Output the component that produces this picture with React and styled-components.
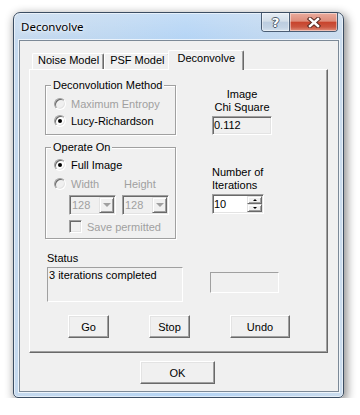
import React from 'react';
import styled, { createGlobalStyle } from 'styled-components';

const GlobalStyle = createGlobalStyle`
  html, body {
    margin: 0;
    padding: 0;
    background: #fff;
  }
  body {
    font-family: 'Liberation Sans', Arial, sans-serif;
    font-size: 11px;
    color: #000;
  }
`;

const GREY_TEXT = '#a0a0a0';

const Page = styled.div`
  padding: 12px 0 0 13px;
`;

const Window = styled.div`
  box-sizing: border-box;
  width: 331px;
  height: 386px;
  display: flex;
  flex-direction: column;
  padding: 0 4px 5px 5px;
  border: 1px solid #3b4d62;
  border-radius: 7px 7px 5px 5px;
  background: linear-gradient(180deg, rgba(255, 255, 255, 0.22) 0, rgba(255, 255, 255, 0) 28px),
    linear-gradient(90deg, #c5d9ee 0%, #bdd7f1 30%, #b4d4f5 52%, #bfd7f0 78%, #cadcee 100%);
  box-shadow: inset 0 0 0 1px rgba(255, 255, 255, 0.55), 2px 3px 10px 1px rgba(0, 0, 0, 0.45);
`;

const TitleBar = styled.div`
  display: flex;
  align-items: flex-start;
  height: 27px;
  flex-shrink: 0;
`;

const Title = styled.div`
  margin: 6px 0 0 2px;
  font-family: 'Noto Sans', 'Open Sans', sans-serif;
  font-size: 11.5px;
  line-height: 15px;
  color: #000;
  text-shadow: 0 0 6px rgba(255, 255, 255, 0.95), 0 0 3px rgba(255, 255, 255, 0.9);
`;

const CaptionButtons = styled.div`
  display: flex;
  margin: 0 1px 0 auto;
  height: 19px;
  box-sizing: border-box;
  border: 1px solid #4a5d74;
  border-top: none;
  border-radius: 0 0 4px 4px;
  overflow: hidden;
`;

const CaptionButton = styled.div`
  display: flex;
  align-items: center;
  justify-content: center;
  width: ${(p) => p.$w}px;
  box-shadow: inset 0 0 0 1px rgba(255, 255, 255, 0.45);
  background: ${(p) =>
    p.$close
      ? 'linear-gradient(180deg, #eaab9d 0%, #de8d7b 45%, #c8442d 52%, #cb5741 78%, #e3927e 100%)'
      : 'linear-gradient(180deg, #e6edf5 0%, #d3dee9 45%, #bccde0 52%, #c3d3e4 80%, #d6e2ee 100%)'};
  & + & {
    border-left: 1px solid #4a5d74;
  }
`;

const HelpGlyph = styled.span`
  font-family: 'DejaVu Sans', sans-serif;
  font-weight: bold;
  font-size: 13px;
  line-height: 13px;
  color: #fff;
  text-shadow: 1px 0 0 #4d5b6c, -1px 0 0 #4d5b6c, 0 1px 0 #4d5b6c, 0 -1px 0 #4d5b6c;
`;

const Client = styled.div`
  flex: 1;
  display: flex;
  flex-direction: column;
  padding: 9px 10px 0 9px;
  border: 1px solid #7c8997;
  background: #f0f0f0;
  box-shadow: 0 0 0 1px rgba(255, 255, 255, 0.7);
`;

const TabStrip = styled.div`
  position: relative;
  z-index: 1;
  display: flex;
  align-items: flex-end;
  height: 19px;
  padding-left: 3px;
`;

const Tab = styled.div`
  position: relative;
  z-index: ${(p) => (p.$active ? 2 : 1)};
  box-sizing: border-box;
  height: ${(p) => (p.$active ? 20 : 16)}px;
  margin: ${(p) => (p.$active ? '0 -2px -1px -2px' : '0')};
  padding: ${(p) => (p.$active ? '1px 8px 0 9px' : '0 4px 0 5px')};
  line-height: 13px;
  background: #f0f0f0;
  border: 1px solid;
  border-bottom: none;
  border-color: #fff #696969 #fff #fff;
  border-radius: 2px 2px 0 0;
  box-shadow: inset -1px 0 0 #a0a0a0;
  white-space: nowrap;
`;

const Panel = styled.div`
  box-sizing: border-box;
  width: 299px;
  height: 284px;
  padding: 9px 0 0 15px;
  border: 1px solid;
  border-color: #fff #696969 #696969 #fff;
  box-shadow: inset -1px -1px 0 #a0a0a0;
`;

const TopGrid = styled.div`
  display: grid;
  grid-template-columns: 131px 60px;
  column-gap: 36px;
  row-gap: 6px;
  align-items: start;
`;

const Group = styled.fieldset`
  box-sizing: border-box;
  width: 131px;
  min-width: 0;
  margin: 0;
  padding: ${(p) => p.$pad};
  border: 1px solid #a0a0a0;
  box-shadow: inset 1px 1px 0 #fff, 1px 1px 0 #fff;
`;

const Legend = styled.legend`
  margin-left: -3px;
  padding: 0 2px;
  line-height: 13px;
  background: #f0f0f0;
`;

const OptionRow = styled.div`
  display: flex;
  align-items: center;
  height: 17px;
  color: ${(p) => (p.$disabled ? GREY_TEXT : '#000')};
  margin-top: ${(p) => p.$mt || 0}px;
`;

const Radio = styled.span`
  position: relative;
  box-sizing: border-box;
  flex-shrink: 0;
  width: 12px;
  height: 12px;
  margin-right: 5px;
  border-radius: 50%;
  border: 1px solid;
  border-color: #a0a0a0 #fff #fff #a0a0a0;
  box-shadow: inset 1px 1px 0 #696969, inset -1px -1px 0 #e3e3e3;
  background: ${(p) => (p.$disabled ? '#f0f0f0' : '#fff')};
  &::after {
    content: '';
    display: ${(p) => (p.$checked ? 'block' : 'none')};
    position: absolute;
    left: 3px;
    top: 3px;
    width: 4px;
    height: 4px;
    border-radius: 50%;
    background: #000;
  }
`;

const SizeLabel = styled.span`
  width: ${(p) => p.$w}px;
`;

const ComboRow = styled.div`
  display: flex;
  gap: 6px;
  margin: 3px 0 0 15px;
`;

const Combo = styled.div`
  box-sizing: border-box;
  display: flex;
  align-items: center;
  width: 47px;
  height: 20px;
  padding: 1px 1px 1px 1px;
  border: 1px solid;
  border-color: #a0a0a0 #fff #fff #a0a0a0;
  box-shadow: inset 1px 1px 0 #696969, inset -1px -1px 0 #e3e3e3;
  color: ${GREY_TEXT};
  line-height: 13px;
`;

const ComboText = styled.span`
  flex: 1;
  padding-left: 1px;
`;

const RaisedButton = styled.span`
  box-sizing: border-box;
  display: flex;
  align-items: center;
  justify-content: center;
  width: ${(p) => p.$w}px;
  height: ${(p) => p.$h}px;
  background: #f0f0f0;
  border: 1px solid;
  border-color: #e3e3e3 #696969 #696969 #e3e3e3;
  box-shadow: inset 1px 1px 0 #fff, inset -1px -1px 0 #a0a0a0;
`;

const Arrow = styled.span`
  width: 0;
  height: 0;
  border-left: ${(p) => p.$size}px solid transparent;
  border-right: ${(p) => p.$size}px solid transparent;
  ${(p) => (p.$up ? 'border-bottom' : 'border-top')}: ${(p) => p.$size}px solid ${(p) => p.$color};
`;

const CheckRow = styled.div`
  display: flex;
  align-items: center;
  height: 13px;
  margin: 5px 0 0 15px;
  color: ${GREY_TEXT};
`;

const CheckBox = styled.span`
  box-sizing: border-box;
  width: 13px;
  height: 13px;
  margin-right: 5px;
  border: 1px solid;
  border-color: #a0a0a0 #fff #fff #a0a0a0;
  box-shadow: inset 1px 1px 0 #696969, inset -1px -1px 0 #e3e3e3;
  background: #f0f0f0;
`;

const SideBlock = styled.div`
  display: flex;
  flex-direction: column;
  align-items: ${(p) => (p.$center ? 'center' : 'flex-start')};
  margin-top: ${(p) => p.$mt}px;
  line-height: 13px;
`;

const FieldBox = styled.div`
  box-sizing: border-box;
  display: flex;
  align-items: center;
  width: ${(p) => p.$w}px;
  height: ${(p) => p.$h}px;
  margin-top: 2px;
  border: 1px solid;
  border-color: #a0a0a0 #fff #fff #a0a0a0;
  box-shadow: inset 1px 1px 0 #696969, inset -1px -1px 0 #e3e3e3;
  background: ${(p) => (p.$white ? '#fff' : '#f0f0f0')};
`;

const FieldText = styled.span`
  flex: 1;
  padding-left: 1px;
`;

const SpinButtons = styled.div`
  display: flex;
  flex-direction: column;
  margin-right: 1px;
`;

const StatusRow = styled.div`
  display: flex;
  align-items: flex-start;
  margin: 13px 0 0 2px;
`;

const StatusBlock = styled.div`
  display: flex;
  flex-direction: column;
  line-height: 13px;
`;

const StaticBox = styled.div`
  box-sizing: border-box;
  width: ${(p) => p.$w}px;
  height: ${(p) => p.$h}px;
  margin-top: ${(p) => p.$mt}px;
  margin-left: ${(p) => p.$ml || 0}px;
  padding: 1px 0 0 1px;
  border: 1px solid;
  border-color: #a0a0a0 #fff #fff #a0a0a0;
  line-height: 13px;
`;

const ButtonRow = styled.div`
  display: flex;
  gap: 40px;
  margin: 13px 0 0 23px;
`;

const Button = styled.button`
  box-sizing: border-box;
  width: ${(p) => p.$w}px;
  height: 23px;
  padding: 0;
  font-family: 'Liberation Sans', Arial, sans-serif;
  font-size: 11px;
  color: #000;
  background: #f0f0f0;
  border: 1px solid;
  border-color: #fff #696969 #696969 #fff;
  box-shadow: inset -1px -1px 0 #a0a0a0, inset 1px 1px 0 #e3e3e3;
`;

const Footer = styled.div`
  display: flex;
  justify-content: center;
  width: 299px;
  padding-right: 2px;
  box-sizing: border-box;
  margin-top: 8px;
`;

const CloseIcon = () => (
  <svg width="14" height="11" viewBox="0 0 14 11">
    <path d="M3 2 L11 9 M11 2 L3 9" stroke="#5a2a22" strokeWidth="4.4" strokeLinecap="square" />
    <path d="M3 2 L11 9 M11 2 L3 9" stroke="#fff" strokeWidth="2.4" strokeLinecap="square" />
  </svg>
);

const Radiobutton = ({ checked, disabled, children }) => (
  <>
    <Radio $checked={checked} $disabled={disabled} />
    {children}
  </>
);

const DropDown = ({ value }) => (
  <Combo>
    <ComboText>{value}</ComboText>
    <RaisedButton $w={15} $h={16}>
      <Arrow $size={4} $color="#a0a0a0" />
    </RaisedButton>
  </Combo>
);

export default function App() {
  return (
    <Page>
      <GlobalStyle />
      <Window>
        <TitleBar>
          <Title>Deconvolve</Title>
          <CaptionButtons>
            <CaptionButton $w={27}>
              <HelpGlyph>?</HelpGlyph>
            </CaptionButton>
            <CaptionButton $w={47} $close>
              <CloseIcon />
            </CaptionButton>
          </CaptionButtons>
        </TitleBar>
        <Client>
          <TabStrip>
            <Tab>Noise Model</Tab>
            <Tab>PSF Model</Tab>
            <Tab $active>Deconvolve</Tab>
          </TabStrip>
          <Panel>
            <TopGrid>
              <Group $pad="3px 0 5px 8px">
                <Legend>Deconvolution Method</Legend>
                <OptionRow $disabled>
                  <Radiobutton disabled>Maximum Entropy</Radiobutton>
                </OptionRow>
                <OptionRow>
                  <Radiobutton checked>Lucy-Richardson</Radiobutton>
                </OptionRow>
              </Group>
              <SideBlock $center $mt={9}>
                <span>Image</span>
                <span>Chi Square</span>
                <FieldBox $w={60} $h={19}>
                  <FieldText>0.112</FieldText>
                </FieldBox>
              </SideBlock>
              <Group $pad="2px 0 5px 8px">
                <Legend>Operate On</Legend>
                <OptionRow>
                  <Radiobutton checked>Full Image</Radiobutton>
                </OptionRow>
                <OptionRow $disabled $mt={2}>
                  <Radiobutton disabled>
                    <SizeLabel $w={53}>Width</SizeLabel>
                    <span>Height</span>
                  </Radiobutton>
                </OptionRow>
                <ComboRow>
                  <DropDown value="128" />
                  <DropDown value="128" />
                </ComboRow>
                <CheckRow>
                  <CheckBox />
                  Save permitted
                </CheckRow>
              </Group>
              <SideBlock $mt={25}>
                <span>Number of</span>
                <span>Iterations</span>
                <FieldBox $w={52} $h={20} $white>
                  <FieldText>10</FieldText>
                  <SpinButtons>
                    <RaisedButton $w={15} $h={8}>
                      <Arrow $up $size={2} $color="#000" />
                    </RaisedButton>
                    <RaisedButton $w={15} $h={8}>
                      <Arrow $size={2} $color="#000" />
                    </RaisedButton>
                  </SpinButtons>
                </FieldBox>
              </SideBlock>
            </TopGrid>
            <StatusRow>
              <StatusBlock>
                <span>Status</span>
                <StaticBox $w={136} $h={35} $mt={2}>
                  3 iterations completed
                </StaticBox>
              </StatusBlock>
              <StaticBox $w={69} $h={21} $mt={20} $ml={27} />
            </StatusRow>
            <ButtonRow>
              <Button $w={41}>Go</Button>
              <Button $w={41}>Stop</Button>
              <Button $w={60}>Undo</Button>
            </ButtonRow>
          </Panel>
          <Footer>
            <Button $w={75}>OK</Button>
          </Footer>
        </Client>
      </Window>
    </Page>
  );
}
